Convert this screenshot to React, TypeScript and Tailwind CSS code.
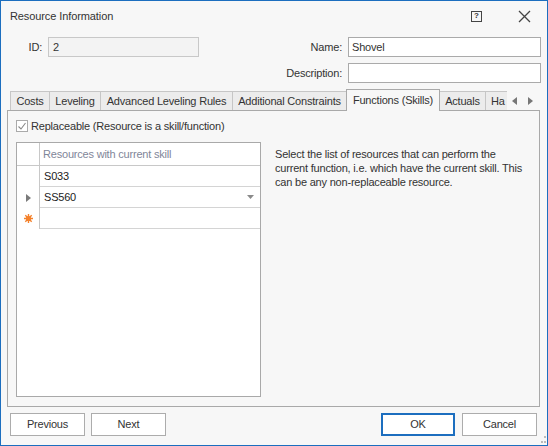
import React from "react";

const font = { fontFamily: '"Liberation Sans", Arial, sans-serif' };

function Tab({ label, active, w }: { label: string; active?: boolean; w: string }) {
  if (active) {
    return (
      <div className={`${w} h-[22px] -mb-px relative z-10 border border-[#a9a9a9] border-b-0 bg-[#f7f7f7] flex items-center justify-center text-[#333]`}>
        {label}
      </div>
    );
  }
  return (
    <div className={`${w} h-[19px] border border-[#c6c6c6] border-b-0 bg-[#ececec] flex items-center justify-center text-[#333] -ml-px first:ml-0 overflow-hidden whitespace-nowrap`}>
      {label}
    </div>
  );
}

export default function App() {
  return (
    <div
      style={font}
      className="w-[548px] h-[446px] border border-[#1c6ebf] bg-[#f7f7f7] flex flex-col text-[11px] tracking-[-0.2px] text-[#333] relative"
    >
      {/* title bar */}
      <div className="h-[30px] flex items-center pl-[9px] pr-[16px]">
        <div className="text-[11px] tracking-[-0.1px] text-[#333] flex-1">Resource Information</div>
        <div className="w-[11px] h-[11px] border border-[#444] flex items-center justify-center text-[8px] font-bold leading-none mr-[36px] tracking-normal">?</div>
        <svg width="13" height="13" viewBox="0 0 13 13">
          <path d="M1 1 L12 12 M12 1 L1 12" stroke="#444" strokeWidth="1.3" />
        </svg>
      </div>

      {/* form rows */}
      <div className="flex mt-[6px] h-[20px] items-center">
        <div className="w-[41px] text-right">ID:</div>
        <div className="ml-[6px] w-[151px] h-[20px] border border-[#c8c8c8] bg-[#f3f3f3] px-[4px] flex items-center">2</div>
        <div className="w-[143px] text-right">Name:</div>
        <div className="ml-[6px] w-[193px] h-[20px] border border-[#aaaaaa] bg-white px-[3px] flex items-center">Shovel</div>
      </div>
      <div className="flex mt-[6px] h-[20px] items-center">
        <div className="w-[341px] text-right">Description:</div>
        <div className="ml-[6px] w-[193px] h-[20px] border border-[#aaaaaa] bg-white"></div>
      </div>

      {/* tabs */}
      <div className="mt-[5px] ml-[9px] mr-[7px] flex items-end h-[22px]">
        <div className="flex items-end">
          <Tab label="Costs" w="w-[40px]" />
          <Tab label="Leveling" w="w-[52px]" />
          <Tab label="Advanced Leveling Rules" w="w-[133px]" />
          <Tab label="Additional Constraints" w="w-[115px]" />
        </div>
        <Tab label="Functions (Skills)" active w="w-[94px] -ml-px" />
        <div className="flex items-end -ml-px">
          <Tab label="Actuals" w="w-[47px]" />
          <div className="w-[22px] h-[19px] -ml-px border border-[#c6c6c6] border-b-0 border-r-0 bg-[#ececec] flex items-center pl-[5px] whitespace-nowrap">Ha</div>
        </div>
        <div className="flex items-center h-[19px] gap-[11px] ml-[5px]">
          <svg width="5" height="8" viewBox="0 0 5 8"><path d="M5 0 L0 4 L5 8 Z" fill="#777" /></svg>
          <svg width="5" height="8" viewBox="0 0 5 8"><path d="M0 0 L5 4 L0 8 Z" fill="#777" /></svg>
        </div>
      </div>

      {/* tab panel */}
      <div className="ml-[6px] mr-[7px] h-[297px] border border-[#a9a9a9] bg-[#f7f7f7] flex flex-col">
        <div className="flex items-center mt-[8px] ml-[8px] h-[14px]">
          <div className="w-[12px] h-[12px] border border-[#aaa] bg-white flex items-center justify-center">
            <svg width="10" height="10" viewBox="0 0 10 10"><path d="M1.5 5.5 L4 8 L8.5 2" stroke="#888" strokeWidth="1.1" fill="none" /></svg>
          </div>
          <div className="ml-[3px]">Replaceable (Resource is a skill/function)</div>
        </div>
        <div className="flex mt-[9px] ml-[8px]">
          {/* grid */}
          <div className="w-[245px] h-[255px] border border-[#a9a9a9] bg-white flex flex-col">
            <div className="flex h-[23px] border-b border-[#c8c8c8]">
              <div className="w-[23px] border-r border-[#c8c8c8]"></div>
              <div className="flex-1 flex items-center pl-[3px] text-[#7f8699]">Resources with current skill</div>
            </div>
            <div className="flex">
              <div className="w-[23px] border-r border-[#c8c8c8] flex flex-col">
                <div className="h-[21px]"></div>
                <div className="h-[21px] flex items-center justify-center">
                  <svg width="5" height="8" viewBox="0 0 5 8"><path d="M0 0 L5 4 L0 8 Z" fill="#7a7a7a" /></svg>
                </div>
                <div className="h-[21px] flex items-center justify-center">
                  <svg width="11" height="11" viewBox="0 0 11 11">
                    <g stroke="#f4812b" strokeWidth="1.4">
                      <path d="M5.5 1 V10 M1 5.5 H10 M2.3 2.3 L8.7 8.7 M8.7 2.3 L2.3 8.7" />
                    </g>
                    <circle cx="5.5" cy="5.5" r="2.6" fill="#f4812b" />
                  </svg>
                </div>
              </div>
              <div className="flex-1 flex flex-col">
                <div className="h-[21px] border-b border-[#d4d4d4] flex items-center pl-[4px] text-[#222]">S033</div>
                <div className="h-[21px] border-b border-[#d4d4d4] flex items-center pl-[4px] pr-[6px] text-[#222]">
                  <span className="flex-1">SS560</span>
                  <svg width="7" height="4" viewBox="0 0 7 4"><path d="M0 0 H7 L3.5 4 Z" fill="#8a8a8a" /></svg>
                </div>
                <div className="h-[21px] border-b border-[#d4d4d4]"></div>
              </div>
            </div>
          </div>
          {/* description */}
          <div className="ml-[14px] mt-[5px] w-[255px] leading-[14px] text-[#333]">
            Select the list of resources that can perform the current function, i.e. which have the current skill. This can be any non-replaceable resource.
          </div>
        </div>
      </div>

      {/* buttons */}
      <div className="flex mt-[6px] ml-[9px] mr-[10px] h-[23px]">
        <div className="w-[75px] h-[23px] border border-[#acacac] bg-white flex items-center justify-center">Previous</div>
        <div className="ml-[6px] w-[75px] h-[23px] border border-[#acacac] bg-white flex items-center justify-center">Next</div>
        <div className="flex-1"></div>
        <div className="w-[74px] h-[23px] border-2 border-[#1c6ebf] bg-white flex items-center justify-center">OK</div>
        <div className="ml-[7px] w-[75px] h-[23px] border border-[#acacac] bg-white flex items-center justify-center">Cancel</div>
      </div>

      {/* size grip */}
      <div className="absolute right-[1px] bottom-[1px] grid grid-cols-3 gap-[1px] w-[8px] h-[8px]">
        <span></span><span></span><span className="w-[2px] h-[2px] bg-[#bbb]"></span>
        <span></span><span className="w-[2px] h-[2px] bg-[#bbb]"></span><span className="w-[2px] h-[2px] bg-[#bbb]"></span>
      </div>
    </div>
  );
}
